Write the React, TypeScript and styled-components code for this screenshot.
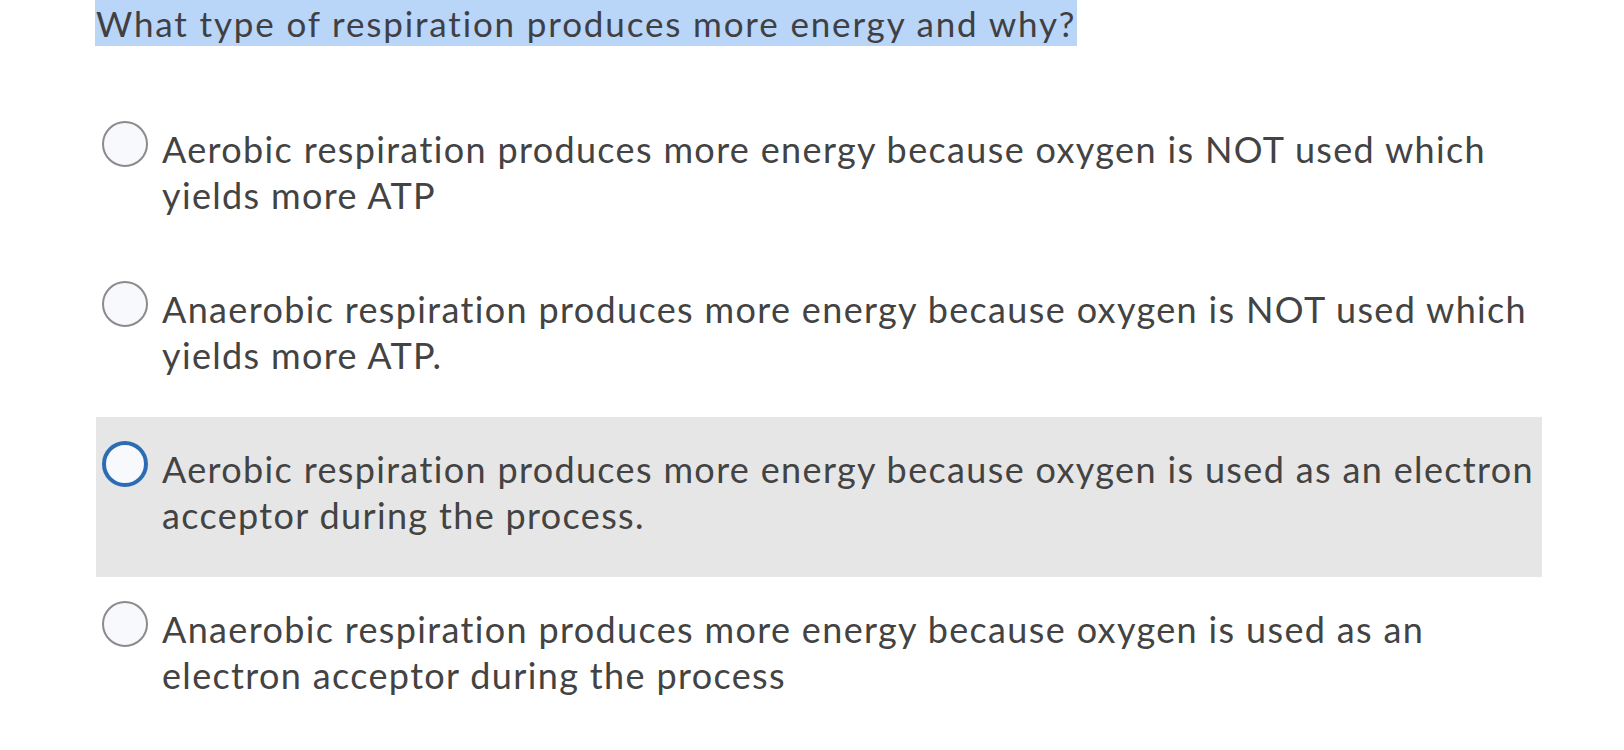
import React from "react";
import styled, { createGlobalStyle, css } from "styled-components";

const Global = createGlobalStyle`
  html, body { margin: 0; padding: 0; background: #ffffff; }
  body { font-family: Lato, "Open Sans", "Liberation Sans", sans-serif; color: #434343; }
`;

const Page = styled.div`
  padding-left: 96px;
  width: 1446px;
`;

const Question = styled.div`
  font-size: 35px;
  letter-spacing: 1.85px;
  line-height: 46px;
  height: 46px;
  margin-bottom: 51px;
`;

const Highlight = styled.span`
  display: inline-block;
  background: #b9d5f8;
  padding: 0 1px;
  margin-left: -1px;
  color: #3f3f44;
`;

const Options = styled.div`
  display: flex;
  flex-direction: column;
`;

const Row = styled.div<{ $active?: boolean }>`
  display: flex;
  align-items: flex-start;
  height: 160px;
  box-sizing: border-box;
  padding: 0 2px 0 6px;
  ${(p) =>
    p.$active &&
    css`
      background: #e6e6e6;
    `}
`;

const Radio = styled.span<{ $active?: boolean }>`
  flex: none;
  box-sizing: border-box;
  width: 46px;
  height: 46px;
  margin-top: 24px;
  border-radius: 50%;
  background: #f8f9fd;
  border: ${(p) => (p.$active ? "4px solid #2c6cb3" : "2px solid #8b8b8b")};
`;

const Label = styled.div`
  margin-left: 14px;
  padding-top: 29px;
  font-size: 36px;
  letter-spacing: 1.35px;
  line-height: 46px;
  flex: 1;
`;

const options = [
  "Aerobic respiration produces more energy because oxygen is NOT used which yields more ATP",
  "Anaerobic respiration produces more energy because oxygen is NOT used which yields more ATP.",
  "Aerobic respiration produces more energy because oxygen is used as an electron acceptor during the process.",
  "Anaerobic respiration produces more energy because oxygen is used as an electron acceptor during the process",
];

export default function App() {
  return (
    <>
      <Global />
      <Page>
        <Question>
          <Highlight>What type of respiration produces more energy and why?</Highlight>
        </Question>
        <Options>
          {options.map((t, i) => (
            <Row key={i} $active={i === 2}>
              <Radio $active={i === 2} />
              <Label>{t}</Label>
            </Row>
          ))}
        </Options>
      </Page>
    </>
  );
}
